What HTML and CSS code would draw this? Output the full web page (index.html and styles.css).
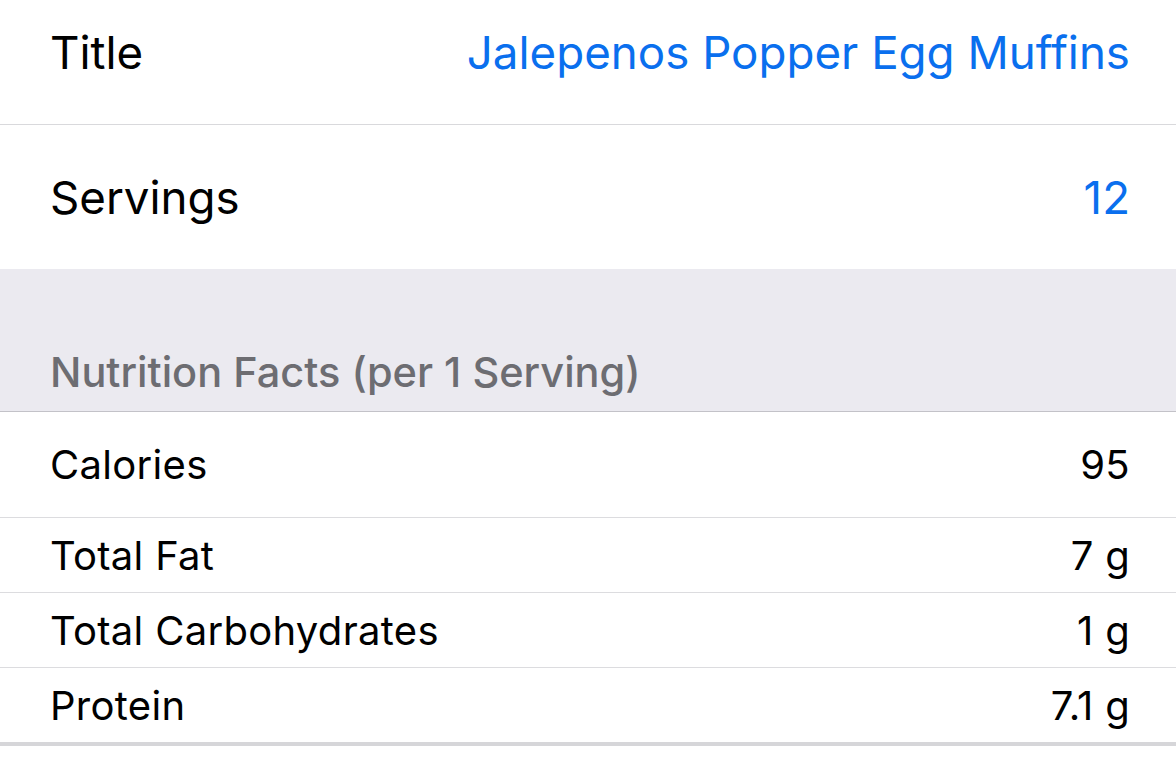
FILE: index.html
```html
<!DOCTYPE html>
<html lang="en">
<head>
<meta charset="utf-8">
<title>Recipe</title>
<link rel="stylesheet" href="styles.css">
</head>
<body>
<div class="table">
  <div class="row row-title">
    <span class="label">Title</span>
    <span class="value value-link">Jalepenos Popper Egg Muffins</span>
  </div>
  <div class="row row-servings">
    <span class="label">Servings</span>
    <span class="value value-link">12</span>
  </div>
  <div class="section-header">
    <span class="section-title">Nutrition Facts (per 1 Serving)</span>
  </div>
  <div class="nutrition">
    <div class="row row-fact row-first">
      <span class="label">Calories</span>
      <span class="value">95</span>
    </div>
    <div class="row row-fact">
      <span class="label">Total Fat</span>
      <span class="value">7 g</span>
    </div>
    <div class="row row-fact">
      <span class="label">Total Carbohydrates</span>
      <span class="value">1 g</span>
    </div>
    <div class="row row-fact row-last">
      <span class="label">Protein</span>
      <span class="value">7.1 g</span>
    </div>
  </div>
</div>
</body>
</html>
```

FILE: styles.css
```css
html, body {
  margin: 0;
  padding: 0;
  background: #ffffff;
}

body {
  font-family: Inter, Roboto, "Liberation Sans", sans-serif;
  color: #000000;
  width: 1176px;
  height: 763px;
  overflow: hidden;
}

.table {
  display: flex;
  flex-direction: column;
}

.row {
  display: flex;
  justify-content: space-between;
  align-items: center;
  box-sizing: border-box;
  padding: 0 46px 0 50px;
  background: #ffffff;
  white-space: nowrap;
}

.value-link {
  color: #0a6fee;
}

.row-title {
  height: 125px;
  font-size: 45.7px;
  padding-bottom: 20px;
  border-bottom: 1px solid #d9d9dc;
}

.row-servings {
  height: 144px;
  font-size: 45.7px;
}

.section-header {
  height: 143px;
  box-sizing: border-box;
  background: #ebeaf0;
  border-bottom: 1px solid #c3c2c8;
  display: flex;
  align-items: flex-end;
  padding: 0 0 14px 50px;
}

.section-title {
  font-size: 41.5px;
  font-weight: 500;
  color: #6d6d72;
}

.row-fact {
  height: 75px;
  font-size: 40px;
  letter-spacing: 0.3px;
  border-bottom: 1px solid #dcdcdf;
}

.row-first {
  height: 106px;
}

.row-last {
  height: 78px;
  border-bottom: 4px solid #d6d6d9;
}
```
